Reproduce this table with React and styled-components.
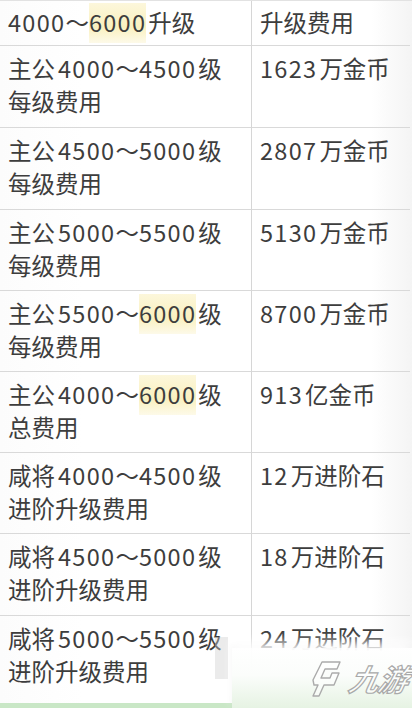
import React from "react";
import styled, { createGlobalStyle } from "styled-components";

const Global = createGlobalStyle`
  html, body { margin: 0; padding: 0; background: #ffffff; }
  body { width: 412px; height: 708px; overflow: hidden; }
  #root { width: 412px; height: 708px; }
`;

const Page = styled.div`
  position: relative;
  width: 412px;
  height: 708px;
  overflow: hidden;
  background: linear-gradient(90deg, #fcfcfc 0%, #ffffff 20%, #ffffff 90%, #f4f4f4 100%);
  font-family: "Noto Sans CJK SC", "Noto Sans", sans-serif;
  color: #3d3d3d;
`;

const Table = styled.div`
  display: grid;
  grid-template-columns: 252px 158px;
  border-top: 1px solid #e2e2e2;
`;

const Cell = styled.div`
  box-sizing: border-box;
  height: ${(p) => p.$h}px;
  padding: ${(p) => (p.$single ? "5px" : "6px")} 0 0 8px;
  border-bottom: ${(p) => (p.$last ? "none" : "1px solid #d9d9d9")};
  border-right: ${(p) => (p.$right ? "none" : "1px solid #d6d6d6")};
  font-size: 23.5px;
  line-height: 33px;
  white-space: nowrap;
`;

const Line = styled.div`
  display: block;
`;

const Num = styled.span`
  letter-spacing: 1.3px;
  margin: 0 ${(p) => (p.$after ? "2px" : "0")} 0 ${(p) => (p.$before ? "3px" : "0")};
`;

const Hl = styled.span`
  background: linear-gradient(180deg, rgba(250, 240, 190, 0.55) 0%, rgba(248, 236, 170, 0.75) 60%, rgba(250, 242, 200, 0.4) 100%);
  padding: 2px 0 4px;
  letter-spacing: 1.3px;
  margin-right: 2px;
`;

const Overlay = styled.div`
  position: absolute;
  left: 232px;
  top: 648px;
  width: 180px;
  height: 60px;
  background: linear-gradient(180deg, rgba(255,255,255,0.96) 0%, #fbfdfb 45%, #e6f3e3 100%);
  box-shadow: 0 -6px 10px rgba(255,255,255,0.9), 0 -2px 6px rgba(0,0,0,0.06);
  display: flex;
  align-items: center;
  justify-content: flex-end;
  padding-right: 4px;
  box-sizing: border-box;
  gap: 4px;
`;

const Brand = styled.span`
  font-family: "Noto Sans CJK SC", sans-serif;
  font-size: 30px;
  font-weight: 700;
  font-style: italic;
  color: rgba(255,255,255,0.6);
  -webkit-text-stroke: 1.2px #a9a9a9;
  transform: skewX(-12deg);
  letter-spacing: -1px;
`;

const GreenStrip = styled.div`
  position: absolute;
  left: 0;
  top: 703px;
  width: 232px;
  height: 5px;
  background: #c9e7c6;
`;

const GreyBlock = styled.div`
  position: absolute;
  left: 215px;
  top: 637px;
  width: 13px;
  height: 42px;
  background: rgba(205, 205, 205, 0.4);
`;

const rows = [
  { left: [["n:4000", "～", "h:6000", "升级"]], right: "升级费用" },
  { left: [["主公", "n:4000", "～", "n:4500", "级"], ["每级费用"]], right: "1623万金币" },
  { left: [["主公", "n:4500", "～", "n:5000", "级"], ["每级费用"]], right: "2807万金币" },
  { left: [["主公", "n:5000", "～", "n:5500", "级"], ["每级费用"]], right: "5130万金币" },
  { left: [["主公", "n:5500", "～", "h:6000", "级"], ["每级费用"]], right: "8700万金币" },
  { left: [["主公", "n:4000", "～", "h:6000", "级"], ["总费用"]], right: "913亿金币" },
  { left: [["咸将", "n:4000", "～", "n:4500", "级"], ["进阶升级费用"]], right: "12万进阶石" },
  { left: [["咸将", "n:4500", "～", "n:5000", "级"], ["进阶升级费用"]], right: "18万进阶石" },
  { left: [["咸将", "n:5000", "～", "n:5500", "级"], ["进阶升级费用"]], right: "24万进阶石" },
];

const heights = [45, 82, 82, 81, 81, 81, 81, 82, 88];

function renderSeg(seg, i, arr) {
  if (seg.startsWith("n:")) {
    const prev = arr[i - 1];
    const next = arr[i + 1];
    return (
      <Num key={i} $before={prev && prev !== "～"} $after={next && next !== "～"}>
        {seg.slice(2)}
      </Num>
    );
  }
  if (seg.startsWith("h:")) {
    return <Hl key={i}>{seg.slice(2)}</Hl>;
  }
  return <React.Fragment key={i}>{seg}</React.Fragment>;
}

function renderRight(text) {
  const m = text.match(/^(\d+)(.*)$/);
  if (!m) return text;
  return (
    <>
      <Num $after>{m[1]}</Num>
      {m[2]}
    </>
  );
}

function Logo() {
  return (
    <svg width="36" height="40" viewBox="0 0 36 40" fill="none">
      <path
        d="M12 4 L30 4 L27 11 L15 11 L11 20 L20 20 L22 15 L29 15 L24 27 L14 27 L9 38 L3 38 L8 27 L4 27 L3 22 Z"
        fill="rgba(255,255,255,0.5)"
        stroke="#ababab"
        strokeWidth="1.4"
        strokeLinejoin="round"
      />
    </svg>
  );
}

export default function App() {
  return (
    <>
      <Global />
      <Page>
        <Table>
          {rows.map((r, idx) => {
            const single = r.left.length === 1;
            const last = idx === rows.length - 1;
            return (
              <React.Fragment key={idx}>
                <Cell $h={heights[idx]} $single={single} $last={last}>
                  {r.left.map((line, li) => (
                    <Line key={li}>{line.map(renderSeg)}</Line>
                  ))}
                </Cell>
                <Cell $h={heights[idx]} $single={single} $last={last} $right>
                  <Line>{renderRight(r.right)}</Line>
                </Cell>
              </React.Fragment>
            );
          })}
        </Table>
        <GreyBlock />
        <GreenStrip />
        <Overlay>
          <Logo />
          <Brand>九游</Brand>
        </Overlay>
      </Page>
    </>
  );
}
